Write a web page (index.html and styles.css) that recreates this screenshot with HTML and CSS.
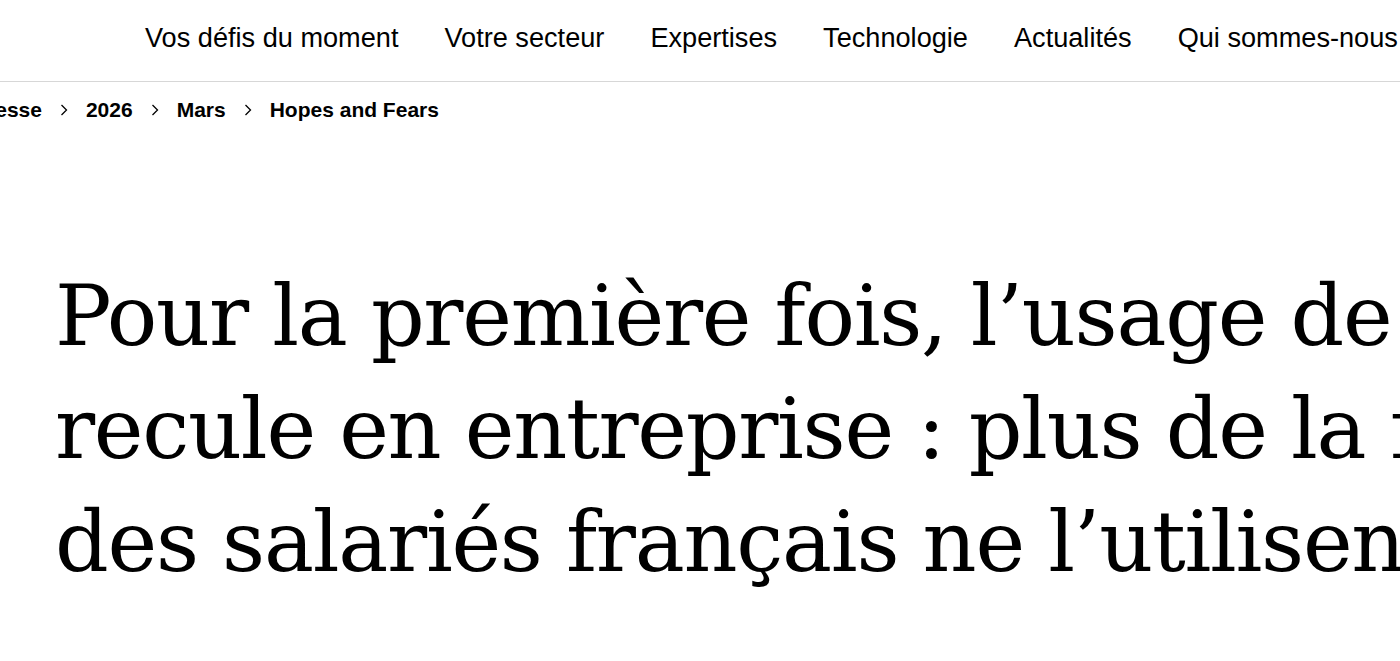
FILE: index.html
```html
<!DOCTYPE html>
<html lang="fr">
<head>
<meta charset="utf-8">
<title>Hopes and Fears</title>
<link rel="stylesheet" href="styles.css">
</head>
<body>
<header class="site-header">
  <nav class="main-nav">
    <a class="nav-link" href="#">Vos défis du moment</a>
    <a class="nav-link" href="#">Votre secteur</a>
    <a class="nav-link" href="#">Expertises</a>
    <a class="nav-link" href="#">Technologie</a>
    <a class="nav-link" href="#">Actualités</a>
    <a class="nav-link" href="#">Qui sommes-nous ?</a>
  </nav>
</header>
<main class="content">
  <ol class="breadcrumb">
    <li class="crumb"><a href="#">Salle de presse</a></li>
    <li class="sep"><svg width="8" height="12" viewBox="0 0 8 12"><path d="M1.5 1 L6.5 6 L1.5 11" fill="none" stroke="#000" stroke-width="1.3"/></svg></li>
    <li class="crumb"><a href="#">2026</a></li>
    <li class="sep"><svg width="8" height="12" viewBox="0 0 8 12"><path d="M1.5 1 L6.5 6 L1.5 11" fill="none" stroke="#000" stroke-width="1.3"/></svg></li>
    <li class="crumb"><a href="#">Mars</a></li>
    <li class="sep"><svg width="8" height="12" viewBox="0 0 8 12"><path d="M1.5 1 L6.5 6 L1.5 11" fill="none" stroke="#000" stroke-width="1.3"/></svg></li>
    <li class="crumb current">Hopes and Fears</li>
  </ol>
  <h1 class="headline">Pour la première fois, l’usage de l’IA<br>recule en entreprise : plus de la moitié<br>des salariés français ne l’utilisent pas</h1>
</main>
</body>
</html>
```
FILE: styles.css
```css
html, body {
  margin: 0;
  padding: 0;
  overflow: hidden;
  background: #fff;
  color: #000;
}
body {
  width: 1400px;
  height: 661px;
  font-family: "Liberation Sans", Arial, sans-serif;
}
a {
  color: inherit;
  text-decoration: none;
}
.site-header {
  border-bottom: 1px solid #d7d7d7;
}
.main-nav {
  display: flex;
  gap: 46px;
  padding: 0 0 6px 145px;
  height: 75px;
  white-space: nowrap;
}
.nav-link {
  font-size: 27.15px;
  line-height: 75px;
}
.breadcrumb {
  list-style: none;
  margin: 0 0 0 -111px;
  padding: 16px 0 0;
  display: flex;
  align-items: center;
  gap: 18px;
  white-space: nowrap;
}
.crumb {
  font-size: 21px;
  font-weight: 700;
  line-height: 24px;
}
.sep {
  display: flex;
  align-items: center;
  height: 24px;
}
.headline {
  margin: 138px 0 0 55px;
  font-family: "DejaVu Serif", "Liberation Serif", serif;
  font-weight: 400;
  font-size: 84px;
  line-height: 113px;
  letter-spacing: -1.3px;
  word-spacing: -1px;
  white-space: nowrap;
}
```
